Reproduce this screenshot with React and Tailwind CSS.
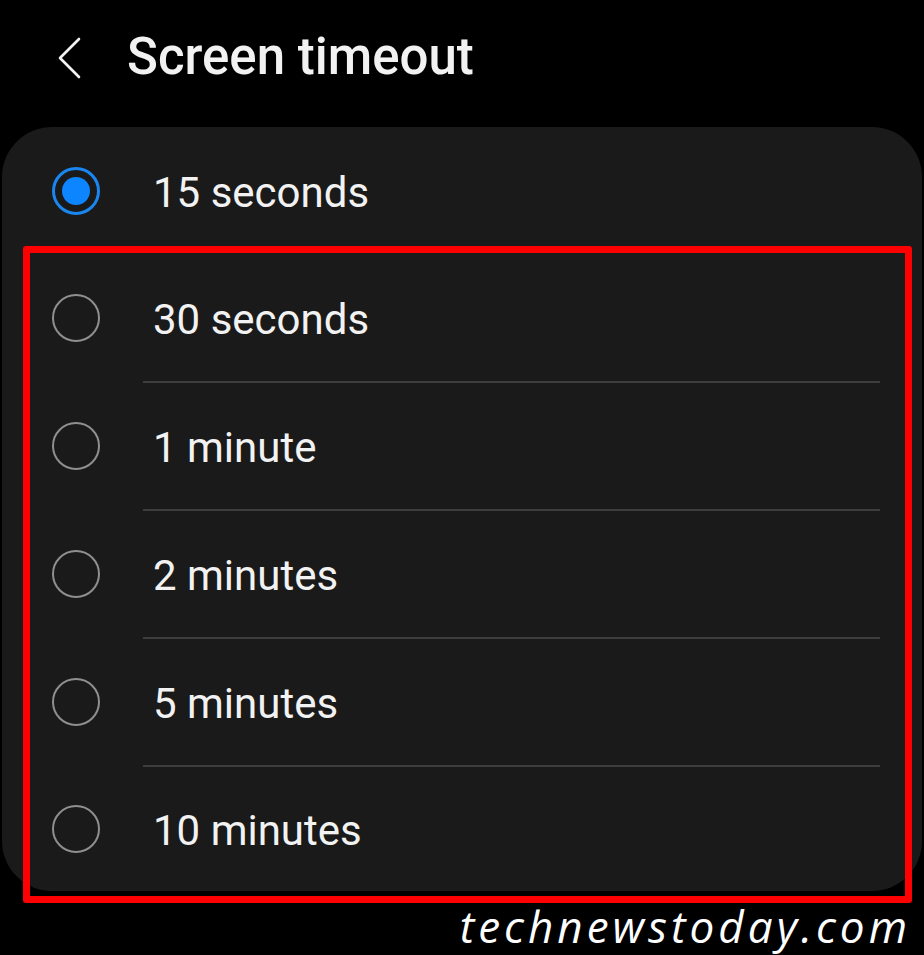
import React, { useState } from 'react';

const OPTIONS = ['15 seconds', '30 seconds', '1 minute', '2 minutes', '5 minutes', '10 minutes'];

function Radio({ checked }) {
  if (checked) {
    return (
      <div className="flex h-[48px] w-[48px] shrink-0 items-center justify-center rounded-full border-[3px] border-[#1a86f0]">
        <div className="h-[28px] w-[28px] rounded-full bg-[#0d85ff]" />
      </div>
    );
  }
  return <div className="h-[48px] w-[48px] shrink-0 rounded-full border-2 border-[#8f8f8f]" />;
}

export default function App() {
  const [selected, setSelected] = useState(0);

  return (
    <div className="min-h-[955px] w-[924px] overflow-hidden bg-black text-[#f2f2f2]" style={{ fontFamily: 'Roboto, "Noto Sans", sans-serif' }}>
      {/* header */}
      <div className="flex h-[127px] items-center pb-[12px]">
        <svg className="ml-[56px] h-[44px] w-[26px]" viewBox="0 0 26 44" fill="none">
          <path d="M23 3 L4 22 L23 41" stroke="#f2f2f2" strokeWidth="2.6" strokeLinecap="round" strokeLinejoin="round" />
        </svg>
        <h1 className="ml-[45px] text-[51px] font-medium">Screen timeout</h1>
      </div>

      {/* options card */}
      <div className="relative mx-[2px] rounded-[50px] bg-[#1a1a1a]">
        {OPTIONS.map((label, i) => (
          <div key={label} onClick={() => setSelected(i)}>
            <div className={`flex items-center pl-[50px] ${i === 0 ? 'h-[128px]' : i === 5 ? 'h-[124px]' : 'h-[126px]'}`}>
              <Radio checked={selected === i} />
              <span className="ml-[53px] pt-[3px] text-[42px] leading-none">{label}</span>
            </div>
            {i > 0 && i < 5 && <div className="ml-[141px] mr-[42px] h-[2px] bg-[#3d3d3d]" />}
          </div>
        ))}

        {/* highlight frame */}
        <div className="pointer-events-none absolute left-[21px] top-[119px] h-[657px] w-[889px] rounded-[3px] border-[7px] border-[#ff0000]" />
      </div>

      <div className="flex justify-end pr-[13px] pt-[13px]">
        <span className="text-[44px] italic leading-none tracking-[4px] text-white" style={{ fontFamily: '"Open Sans", sans-serif' }}>
          technewstoday.com
        </span>
      </div>
    </div>
  );
}
